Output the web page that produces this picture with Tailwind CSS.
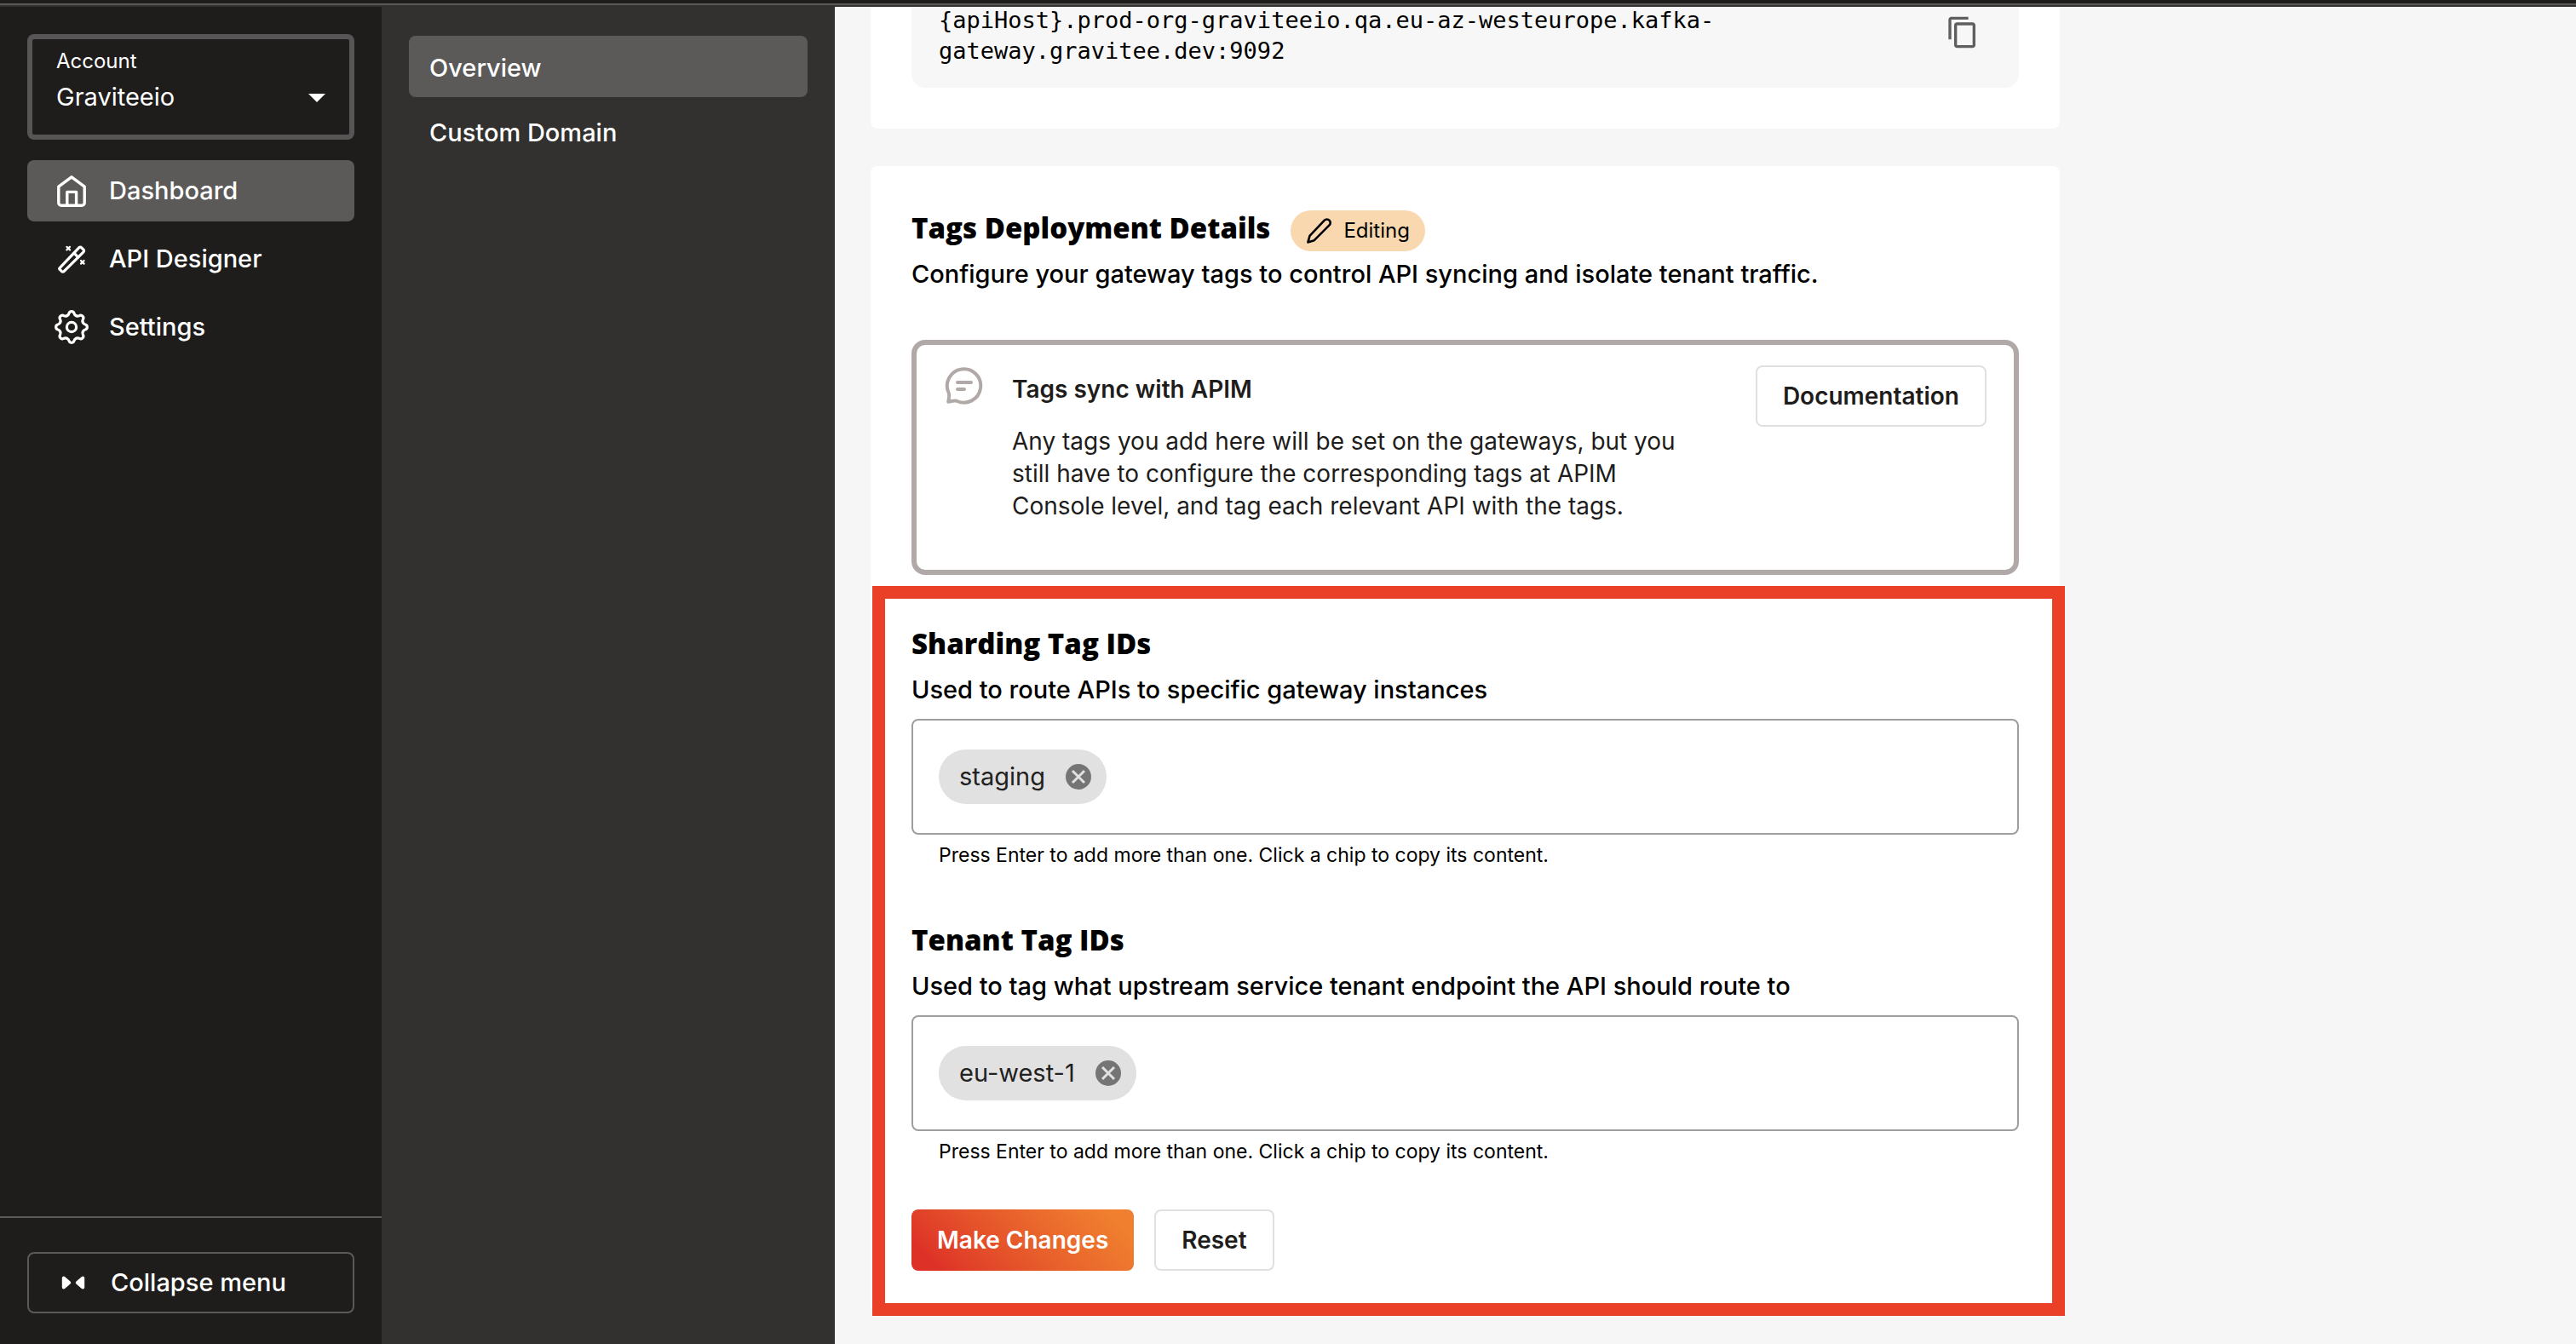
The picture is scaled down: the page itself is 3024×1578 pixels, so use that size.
<!DOCTYPE html>
<html lang="en">
<head>
<meta charset="utf-8">
<meta name="viewport" content="width=device-width, initial-scale=1">
<title>Gravitee Cloud</title>
<script src="https://cdn.jsdelivr.net/npm/@tailwindcss/browser@4"></script>
</head>
<body class="flex h-screen flex-col overflow-hidden bg-[#f6f6f6] font-['Inter',sans-serif] text-[28px] leading-9 text-black">

<header class="h-2 shrink-0 border-b-2 border-[#32312f] bg-[#1e1d1b]">
  <div class="h-full border-b-2 border-[#5a5957]"></div>
</header>

<div class="flex min-h-0 flex-1">

  <!-- Main navigation -->
  <aside class="flex w-[448px] shrink-0 flex-col bg-[#1e1d1b] text-white">
    <div class="px-8 pt-8">
      <div class="relative h-[124px] rounded-lg border-6 border-[#575556] px-7 pt-2.5">
        <label for="account" class="block text-2xl leading-8">Account</label>
        <select id="account" class="mt-2 block h-9 w-full cursor-pointer appearance-none bg-transparent text-[29px] leading-9 outline-none">
          <option>Graviteeio</option>
        </select>
        <svg class="pointer-events-none absolute right-7 top-[64px] h-[10px] w-5" viewBox="0 0 20 10" fill="currentColor" aria-hidden="true"><path d="M0 0h20L10 10z"/></svg>
      </div>
    </div>

    <nav class="flex flex-col gap-2 px-8 pt-6 text-[29px] font-medium" aria-label="Main">
      <a href="#dashboard" aria-current="page" class="flex h-[72px] items-center gap-6 rounded-lg bg-[#5b5a58] px-8">
        <svg class="size-10" viewBox="0 0 40 40" fill="none" stroke="currentColor" stroke-width="3.4" stroke-linejoin="round" aria-hidden="true"><path d="M4.8 15.2 20 3.8l15.2 11.4v19a3 3 0 0 1-3 3H7.800a3 3 0 0 1-3-3z"/><path d="M14.800 37V21.400h10.800V37"/></svg>
        Dashboard
      </a>
      <a href="#designer" class="flex h-[72px] items-center gap-6 rounded-lg px-8">
        <svg class="size-10" viewBox="0 0 40 40" fill="none" stroke="currentColor" stroke-width="3.200" stroke-linejoin="round" stroke-linecap="round" aria-hidden="true"><path d="M5.900 30.800 28.900 6.700a1.800 1.800 0 0 1 2.600 0l2.500 2.500a1.800 1.800 0 0 1 0 2.600L11.100 34.700a1.800 1.800 0 0 1-2.600 0l-2.600-2.600a1 1 0 0 1 0-1.300z"/><path d="m23 13.200 4.600 4.600"/><path stroke-width="2.200" d="m14.400 5.800 3.600 3.600m0-3.600-3.600 3.600M31 22l3.600 3.600m0-3.600L31 25.600"/></svg>
        API Designer
      </a>
      <a href="#settings" class="flex h-[72px] items-center gap-6 rounded-lg px-8">
        <svg class="size-10" viewBox="-20 -20 40 40" fill="none" stroke="currentColor" stroke-width="3.2" stroke-linejoin="round" stroke-linecap="round" aria-hidden="true">
          <circle r="5.600"/>
          <path d="M-5.500-13.300c1.600-.6 2.100-1.300 2.500-2.700C-2.300-19.100 2.300-19.100 3-16c.4 1.400.9 2.100 2.500 2.700"/>
          <path transform="rotate(45)" d="M-5.500-13.300c1.600-.6 2.100-1.300 2.500-2.700C-2.300-19.100 2.300-19.100 3-16c.4 1.400.9 2.100 2.500 2.700"/>
          <path transform="rotate(90)" d="M-5.500-13.300c1.600-.6 2.100-1.300 2.500-2.700C-2.300-19.100 2.300-19.100 3-16c.4 1.400.9 2.100 2.500 2.700"/>
          <path transform="rotate(135)" d="M-5.500-13.300c1.600-.6 2.100-1.300 2.500-2.700C-2.300-19.100 2.300-19.100 3-16c.4 1.400.9 2.100 2.500 2.700"/>
          <path transform="rotate(180)" d="M-5.500-13.300c1.600-.6 2.100-1.300 2.500-2.700C-2.300-19.100 2.300-19.100 3-16c.4 1.400.9 2.100 2.500 2.700"/>
          <path transform="rotate(225)" d="M-5.500-13.300c1.600-.6 2.100-1.300 2.500-2.700C-2.300-19.100 2.300-19.100 3-16c.4 1.400.9 2.100 2.500 2.700"/>
          <path transform="rotate(270)" d="M-5.500-13.300c1.600-.6 2.100-1.300 2.500-2.700C-2.300-19.100 2.300-19.100 3-16c.4 1.400.9 2.100 2.500 2.700"/>
          <path transform="rotate(315)" d="M-5.500-13.300c1.600-.6 2.100-1.300 2.500-2.700C-2.300-19.100 2.300-19.100 3-16c.4 1.400.9 2.100 2.500 2.700"/>
        </svg>
        Settings
      </a>
    </nav>

    <div class="mt-auto border-t-2 border-[#5a5957] px-8 pb-9 pt-10">
      <button type="button" class="flex h-[72px] w-full cursor-pointer items-center gap-6 rounded-lg border-2 border-[#5a5957] px-8 text-left text-[29px] font-medium">
        <svg class="size-10" viewBox="0 0 40 40" fill="currentColor" stroke="currentColor" stroke-width="4" stroke-linejoin="round" aria-hidden="true"><path d="M8.800 14.600v10.800l6.400-5.400z"/><path d="M31.200 14.600v10.800L24.800 20z"/></svg>
        Collapse menu
      </button>
    </div>
  </aside>

  <!-- Section navigation -->
  <nav class="flex w-[532px] shrink-0 flex-col gap-1 bg-[#32312f] px-8 pt-[34px] text-[29px] font-medium text-white" aria-label="Section">
    <a href="#overview" aria-current="page" class="flex h-[72px] items-center rounded-lg bg-[#5b5a58] px-6 pt-1">Overview</a>
    <a href="#custom-domain" class="flex h-[72px] items-center rounded-lg px-6 pt-1">Custom Domain</a>
  </nav>

  <main class="min-w-0 flex-1 overflow-hidden px-[42px]">
    <div class="flex max-w-[1396px] flex-col gap-11">

      <!-- Gateway host, scrolled partly out of view -->
      <section class="-mt-8 rounded-b-lg bg-white px-12 pb-12">
        <div class="flex items-start justify-between rounded-2xl bg-[#f7f7f7] pb-[25px] pl-8 pr-[46px] pt-[30px]">
          <code class="font-['DejaVu_Sans_Mono',monospace] text-[27px] leading-9">{apiHost}.prod-org-graviteeio.qa.eu-az-westeurope.kafka-<br>gateway.gravitee.dev:9092</code>
          <button type="button" aria-label="Copy" class="mt-3 cursor-pointer text-[#5f5f5f]">
            <svg class="size-10" viewBox="0 0 24 24" fill="currentColor" aria-hidden="true"><path d="M16 1H4c-1.100 0-2 .9-2 2v14h2V3h12V1zm3 4H8c-1.100 0-2 .9-2 2v14c0 1.100.9 2 2 2h11c1.100 0 2-.9 2-2V7c0-1.100-.9-2-2-2zm0 16H8V7h11v14z"/></svg>
          </button>
        </div>
      </section>

      <section class="rounded-lg bg-white px-12 pb-12 pt-[52px]">
        <div class="flex items-start gap-6">
          <h2 class="font-['Open_Sans',sans-serif] text-[33px] font-extrabold leading-[42px]">Tags Deployment Details</h2>
          <span class="flex h-12 items-center gap-3 rounded-3xl bg-[#f9d8af] px-[18px] text-2xl">
            <svg class="size-8" viewBox="0 0 32 32" fill="none" stroke="currentColor" stroke-width="2.600" stroke-linejoin="round" aria-hidden="true"><path d="M21.800 3.700a3.900 3.900 0 0 1 5.700 0 3.900 3.900 0 0 1 0 5.700L9.800 27.200l-7.400 2.200 2.100-7.500z"/></svg>
            Editing
          </span>
        </div>
        <p class="mt-2 text-[29px] font-medium leading-[37px]">Configure your gateway tags to control API syncing and isolate tenant traffic.</p>

        <div class="mt-[59px] flex items-start gap-8 rounded-2xl border-6 border-[#b1a9a7] px-8 pb-[56px] pt-6 text-[#1e1d1b]">
          <svg class="size-12 shrink-0 text-[#b1a9a7]" viewBox="0 0 48 48" fill="none" stroke="currentColor" stroke-width="4" stroke-linecap="round" stroke-linejoin="round" aria-hidden="true"><path d="M5.800 32.500A19.700 19.700 0 1 1 15 41.700C12 40.800 9.500 42 5.200 42.700 6 38.500 6.800 36 5.800 32.500z"/><path d="M16 20h16M16 28h8"/></svg>
          <div class="max-w-[820px] pt-2.5">
            <h3 class="font-semibold">Tags sync with APIM</h3>
            <p class="mt-6 leading-[38px]">Any tags you add here will be set on the gateways, but you still have to configure the corresponding tags at APIM Console level, and tag each relevant API with the tags.</p>
          </div>
          <button type="button" class="ml-auto h-[72px] shrink-0 cursor-pointer rounded-lg border-2 border-[#e0e0e0] px-[30px] font-semibold">Documentation</button>
        </div>

        <form class="relative pt-[60px]">
          <label for="sharding" class="block font-['Open_Sans',sans-serif] text-[33px] font-extrabold leading-[42px]">Sharding Tag IDs</label>
          <p class="mt-3.5 text-[29px] font-medium leading-[37px]">Used to route APIs to specific gateway instances</p>
          <div class="mt-4 flex h-[136px] items-center gap-4 rounded-lg border-2 border-[#9e9e9e] px-[30px]">
            <span class="flex h-16 items-center gap-6 rounded-full bg-[#e1e1e1] pl-6 pr-[18px] text-[29px] text-[#212121]">staging
              <button type="button" aria-label="Remove staging" class="cursor-pointer"><svg class="size-[30px]" viewBox="0 0 30 30" aria-hidden="true"><circle cx="15" cy="15" r="15" fill="#757575"/><path d="m8 8 14 14M22 8 8 22" stroke="#e1e1e1" stroke-width="3"/></svg></button>
            </span>
            <input id="sharding" type="text" class="min-w-0 flex-1 bg-transparent outline-none">
          </div>
          <p class="mt-2.5 px-8 text-[23px] leading-7">Press Enter to add more than one. Click a chip to copy its content.</p>

          <label for="tenant" class="mt-[65px] block font-['Open_Sans',sans-serif] text-[33px] font-extrabold leading-[42px]">Tenant Tag IDs</label>
          <p class="mt-3.5 text-[29px] font-medium leading-[37px]">Used to tag what upstream service tenant endpoint the API should route to</p>
          <div class="mt-4 flex h-[136px] items-center gap-4 rounded-lg border-2 border-[#9e9e9e] px-[30px]">
            <span class="flex h-16 items-center gap-6 rounded-full bg-[#e1e1e1] pl-6 pr-[18px] text-[29px] text-[#212121]">eu-west-1
              <button type="button" aria-label="Remove eu-west-1" class="cursor-pointer"><svg class="size-[30px]" viewBox="0 0 30 30" aria-hidden="true"><circle cx="15" cy="15" r="15" fill="#757575"/><path d="m8 8 14 14M22 8 8 22" stroke="#e1e1e1" stroke-width="3"/></svg></button>
            </span>
            <input id="tenant" type="text" class="min-w-0 flex-1 bg-transparent outline-none">
          </div>
          <p class="mt-2.5 px-8 text-[23px] leading-7">Press Enter to add more than one. Click a chip to copy its content.</p>

          <div class="mt-[54px] flex gap-6">
            <button type="submit" class="h-[72px] cursor-pointer rounded-lg bg-linear-45 from-[#dd3127] from-10% to-[#f0802f] to-90% px-[30px] font-semibold text-white">Make Changes</button>
            <button type="reset" class="h-[72px] cursor-pointer rounded-lg border-2 border-[#e0e0e0] px-[30px] font-semibold text-[#1e1d1b]">Reset</button>
          </div>

          <!-- Highlight frame around the tag fields -->
          <div class="pointer-events-none absolute -bottom-[53px] -left-[46px] -right-[54px] top-[13px] border-15 border-[#ea4027]"></div>
        </form>
      </section>
    </div>
  </main>
</div>
</body>
</html>
